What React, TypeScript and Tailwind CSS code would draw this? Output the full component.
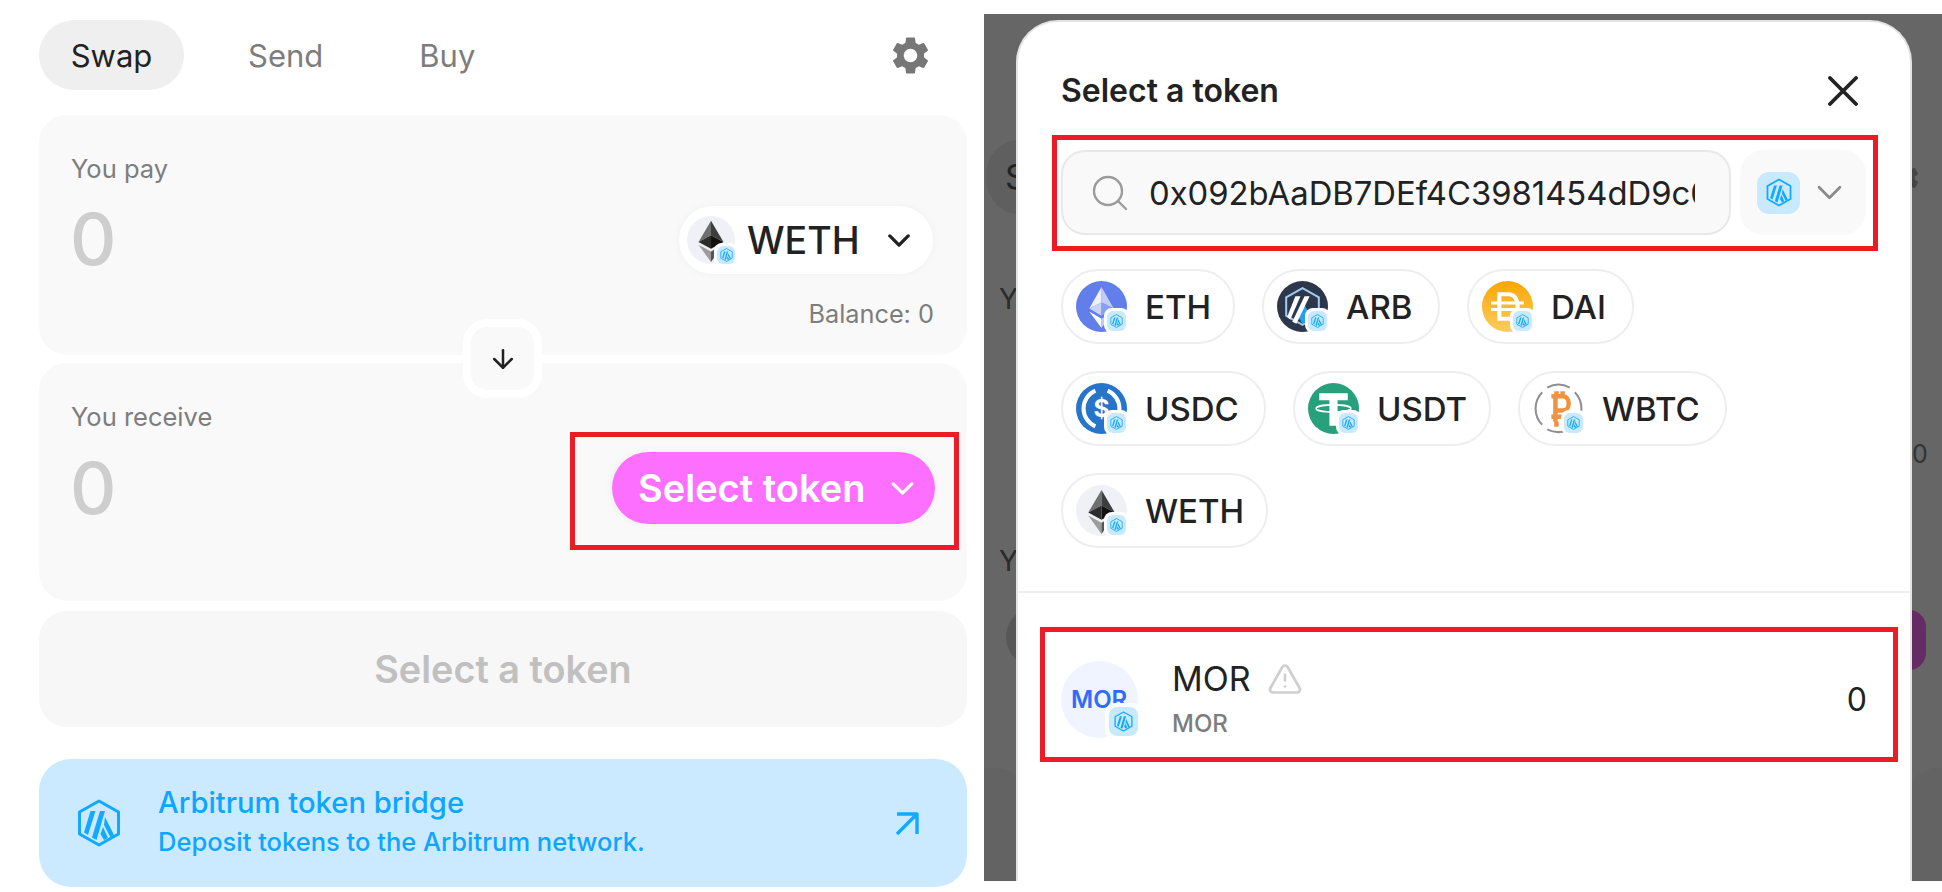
import React from "react";
import { MdSettings } from "react-icons/md";
import { ArrowDown, TriangleAlert } from "lucide-react";

function ArbMark({ className = "", color = "#12aaff" }: { className?: string; color?: string }) {
  return (
    <svg viewBox="0 0 44 48" className={className}>
      <path d="M22 2 L41.5 13 V35 L22 46 L2.5 35 V13 Z" fill="none" stroke={color} strokeWidth="3" strokeLinejoin="round" />
      <path d="M13.5 12 H18.5 L11 36 L7 33.5 Z" fill={color} />
      <path d="M23 12 H28 L19.5 41 L15 38.5 Z" fill={color} />
      <path d="M28 18 L37 36 L33.5 38.5 L27 26 Z" fill={color} />
      <path d="M26 28 L31 39 L27 41 L23.5 35 Z" fill={color} />
    </svg>
  );
}

function Badge({ outer, inner, radius, mark }: { outer: string; inner: string; radius: string; mark: string }) {
  return (
    <span className={`absolute flex items-center justify-center bg-white ${outer}`}>
      <span className={`flex items-center justify-center bg-[#c9e9ff] ${inner} ${radius}`}>
        <ArbMark className={mark} />
      </span>
    </span>
  );
}

function WethGlyph() {
  return (
    <svg viewBox="0 0 50 50" className="w-full h-full">
      <circle cx="25" cy="25" r="25" fill="#f0f1f6" />
      <path d="M25 5 L25 20 L12 27 Z" fill="#6f6f6f" />
      <path d="M25 5 L25 20 L38 27 Z" fill="#3d3d3d" />
      <path d="M12 27 L25 20 L25 34 Z" fill="#2c2c2c" />
      <path d="M38 27 L25 20 L25 34 Z" fill="#111" />
      <path d="M12 30 L25 48 L25 37 Z" fill="#9c9c9c" />
      <path d="M38 30 L25 48 L25 37 Z" fill="#555" />
    </svg>
  );
}

function EthGlyph() {
  return (
    <svg viewBox="0 0 50 50" className="w-full h-full">
      <circle cx="25" cy="25" r="25" fill="#627eea" />
      <path d="M25 6 L25 21 L13 27 Z" fill="#eef1fd" />
      <path d="M25 6 L25 21 L37 27 Z" fill="#c1ccf7" />
      <path d="M13 27 L25 21 L25 34 Z" fill="#c9d3f8" />
      <path d="M37 27 L25 21 L25 34 Z" fill="#8a9ff0" />
      <path d="M13 30 L25 46 L25 37 Z" fill="#ffffff" />
      <path d="M37 30 L25 46 L25 37 Z" fill="#c1ccf7" />
    </svg>
  );
}

function ArbGlyph() {
  return (
    <svg viewBox="0 0 50 50" className="w-full h-full">
      <circle cx="25" cy="25" r="25" fill="#2d374b" />
      <path d="M25 7 L41 16 V34 L25 43 L9 34 V16 Z" fill="#2d374b" stroke="#9dcced" strokeWidth="2" />
      <path d="M25 20 L34 36 L25 42 L20 34 Z" fill="#28a0f0" />
      <path d="M18 15 H23 L13 38 L10 35 Z" fill="#fff" />
      <path d="M27 15 H32 L19 42 L15 40 Z" fill="#fff" />
    </svg>
  );
}

function DaiGlyph() {
  return (
    <svg viewBox="0 0 50 50" className="w-full h-full">
      <defs>
        <linearGradient id="daiG" x1="0" y1="0" x2="0" y2="1">
          <stop offset="0" stopColor="#f9a606" />
          <stop offset="1" stopColor="#fbcc5f" />
        </linearGradient>
      </defs>
      <circle cx="25" cy="25" r="25" fill="url(#daiG)" />
      <path d="M15 11 H26 C33 11 37 17 37 25 C37 33 33 39 26 39 H15 Z M19 15 V35 H26 C30.5 35 33 30.5 33 25 C33 19.5 30.5 15 26 15 Z" fill="#fff" fillRule="evenodd" />
      <path d="M9 21.5 H41 M9 28 H41" stroke="#fff" strokeWidth="3" />
    </svg>
  );
}

function UsdcGlyph() {
  return (
    <svg viewBox="0 0 50 50" className="w-full h-full">
      <circle cx="25" cy="25" r="25" fill="#2775ca" />
      <path d="M19 7.5 A19 19 0 0 0 19 42.5" fill="none" stroke="#fff" strokeWidth="4" />
      <path d="M31 7.5 A19 19 0 0 1 31 42.5" fill="none" stroke="#fff" strokeWidth="4" />
      <text x="25" y="33" textAnchor="middle" fontSize="24" fontWeight="700" fill="#fff" fontFamily="Inter, sans-serif">$</text>
    </svg>
  );
}

function UsdtGlyph() {
  return (
    <svg viewBox="0 0 50 50" className="w-full h-full">
      <circle cx="25" cy="25" r="25" fill="#26a17b" />
      <path d="M11 10 H39 V17 H29 V42 H21 V17 H11 Z" fill="#fff" />
      <ellipse cx="25" cy="25" rx="17" ry="3.5" fill="none" stroke="#fff" strokeWidth="1.6" />
    </svg>
  );
}

function WbtcGlyph() {
  return (
    <svg viewBox="0 0 50 50" className="w-full h-full">
      <circle cx="25" cy="25" r="23.5" fill="#fff" />
      <path d="M9 9 A23 23 0 0 0 9 41" fill="none" stroke="#8f8f9b" strokeWidth="2" />
      <path d="M14 4.5 A23 23 0 0 1 36 4.5" fill="none" stroke="#8f8f9b" strokeWidth="2" />
      <path d="M41 9 A23 23 0 0 1 41 41" fill="none" stroke="#8f8f9b" strokeWidth="2" />
      <path d="M14 45.5 A23 23 0 0 0 30 47.5" fill="none" stroke="#8f8f9b" strokeWidth="2" />
      <path d="M18 13 H29 C37 13 37 27 29 27 H22 M22 13 V38 M18 33 H31 M23 8 V13 M29 8 V13 M23 38 V43" fill="none" stroke="#f09242" strokeWidth="4.4" />
    </svg>
  );
}

function Chip({ label, w, glyph }: { label: string; w: string; glyph: React.ReactNode }) {
  return (
    <div className={`flex items-center h-[75px] rounded-[37px] border-2 border-[#eeeeee] pl-[13px] ${w}`}>
      <span className="relative w-[51px] h-[51px] shrink-0">
        {glyph}
        <Badge outer="right-[-2px] bottom-[-1px] w-[25px] h-[25px] rounded-[8px]" inner="w-[19px] h-[20px]" radius="rounded-[6px]" mark="w-[13px] h-[14px]" />
      </span>
      <span className="ml-[18px] pt-[2px] text-[33px] font-medium text-[#222222] leading-none">{label}</span>
    </div>
  );
}

function RedBox({ className }: { className: string }) {
  return <div className={`absolute border-[5px] border-[#ed1c24] pointer-events-none ${className}`} />;
}

function Chevron({ className, color, width }: { className: string; color: string; width: number }) {
  return (
    <svg viewBox="0 0 24 14" className={className}>
      <path d="M2 2 L12 12 L22 2" fill="none" stroke={color} strokeWidth={width} strokeLinecap="round" strokeLinejoin="round" />
    </svg>
  );
}

function SwapPanel() {
  return (
    <div className="w-[984px] shrink-0 pl-[39px] pr-[17px] pt-[20px]">
      <div className="flex items-center h-[70px] text-[31px] leading-none">
        <span className="flex items-center justify-center w-[145px] h-[70px] rounded-[35px] bg-[#efefef] text-[#222222]">Swap</span>
        <span className="ml-[64px] text-[#7d7d7d]">Send</span>
        <span className="ml-[96px] text-[#7d7d7d]">Buy</span>
        <MdSettings className="ml-auto mr-[34px] text-[#777777]" size={45} />
      </div>

      <div className="relative mt-[25px] h-[240px] rounded-[28px] bg-[#f9f9f9] px-[32px] pt-[37px]">
        <div className="text-[25.5px] leading-[34px] text-[#7d7d7d]">You pay</div>
        <div className="flex items-center justify-between mt-[20px] h-[68px]">
          <span className="-ml-[1px] -mt-[2px] text-[72px] font-medium leading-none text-[#cecece]">0</span>
          <div className="flex items-center h-[68px] w-[254px] mr-[2px] rounded-[34px] bg-white pl-[8px] shadow-[0_0_10px_rgba(0,0,0,0.04)]">
            <span className="relative w-[48px] h-[48px] shrink-0">
              <WethGlyph />
              <Badge outer="right-[-3px] bottom-[-3px] w-[24px] h-[24px] rounded-[8px]" inner="w-[18px] h-[18px]" radius="rounded-[6px]" mark="w-[13px] h-[14px]" />
            </span>
            <span className="ml-[12px] pt-[2px] text-[37.5px] font-medium leading-none text-[#222222]">WETH</span>
            <Chevron className="ml-[28px] w-[22px] h-[13px]" color="#222222" width={3.6} />
          </div>
        </div>
        <div className="mt-[25px] text-right mr-[1px] text-[25.3px] leading-[30px] text-[#7d7d7d]">Balance: 0</div>
        <div className="absolute left-[424px] top-[204px] z-10 w-[79px] h-[79px] rounded-[24px] border-[8px] border-white bg-[#f9f9f9] flex items-center justify-center">
          <ArrowDown size={30} color="#222222" strokeWidth={2} />
        </div>
      </div>

      <div className="relative mt-[8px] h-[238px] rounded-[28px] bg-[#f9f9f9] px-[32px] pt-[37px]">
        <div className="text-[25.5px] leading-[34px] text-[#7d7d7d]">You receive</div>
        <div className="flex items-center justify-between mt-[18px] h-[72px]">
          <span className="-ml-[1px] text-[72px] font-medium leading-none text-[#cecece]">0</span>
          <div className="relative flex items-center w-[323px] h-[72px] rounded-[36px] bg-[#fd6fff] pl-[26px] shadow-[0_0_10px_rgba(0,0,0,0.05)]">
            <span className="text-[38px] font-semibold leading-none text-white">Select token</span>
            <Chevron className="ml-[26px] w-[23px] h-[13px]" color="#ffffff" width={3.5} />
            <RedBox className="-left-[42px] -top-[20px] w-[389px] h-[118px]" />
          </div>
        </div>
      </div>

      <div className="mt-[10px] flex items-center justify-center h-[116px] rounded-[28px] bg-[#f7f7f7] text-[37.8px] font-semibold text-[#c0c0c0]">
        Select a token
      </div>

      <div className="mt-[32px] flex items-center h-[128px] rounded-[32px] bg-[#cbeaff] pl-[38px] pr-[47px] text-[#0ea5ff]">
        <ArbMark className="w-[44px] h-[48px]" color="#12a9ff" />
        <div className="ml-[37px]">
          <div className="-mt-[2px] text-[29.2px] font-medium leading-[36px]">Arbitrum token bridge</div>
          <div className="mt-[4px] text-[25.5px] font-medium leading-[34px]">Deposit tokens to the Arbitrum network.</div>
        </div>
        <svg viewBox="0 0 26 26" className="ml-auto w-[26px] h-[26px]">
          <path d="M3 4 H23 V24 M23 4 L3 24" fill="none" stroke="#12a9ff" strokeWidth="3.4" strokeLinejoin="round" />
        </svg>
      </div>
    </div>
  );
}

function Backdrop() {
  return (
    <>
      <div className="absolute left-[2px] top-[125px] w-[100px] h-[76px] rounded-[36px] bg-[#5f5f5f] flex items-center pl-[19px] text-[34px] leading-none text-[#222222]">S</div>
      <div className="absolute left-[15px] top-[264px] text-[28px] text-[#2a2a2a]">Y</div>
      <div className="absolute left-[15px] top-[526px] text-[28px] text-[#2a2a2a]">Y</div>
      <div className="absolute left-[22px] top-[593px] w-[60px] h-[60px] rounded-full bg-[#575757]" />
      <div className="absolute left-[908px] top-[596px] w-[34px] h-[60px] rounded-full bg-[#642b64]" />
      <div className="absolute left-[902px] top-[146px] text-[#444444]"><MdSettings size={36} /></div>
      <div className="absolute left-[-20px] top-[754px] w-[60px] h-[130px] rounded-[28px] bg-[#636363]" />
      <div className="absolute left-[925px] top-[754px] w-[60px] h-[130px] rounded-[28px] bg-[#636363]" />
      <div className="absolute left-[928px] top-[422px] text-[25px] text-[#333333]">0</div>
    </>
  );
}

function Modal() {
  return (
    <div className="relative z-10 mt-[6px] ml-[32px] w-[896px] rounded-t-[42px] border-x-2 border-t-2 border-[#e4e4e4] bg-white pl-[43px] pr-[44px] pt-[50px]">
      <div className="flex items-center justify-between h-[38px]">
        <span className="text-[32px] font-semibold text-[#222222] leading-none">Select a token</span>
        <svg viewBox="0 0 30 30" className="w-[30px] h-[30px] mr-[8px]">
          <path d="M2 2 L28 28 M28 2 L2 28" stroke="#222222" strokeWidth="3.8" strokeLinecap="round" />
        </svg>
      </div>

      <div className="relative mt-[40px] flex h-[85px] gap-[9px]">
        <div className="flex items-center w-[670px] shrink-0 rounded-[24px] border-2 border-[#e8e8e8] bg-[#f9f9f9] pl-[29px] pr-[34px]">
          <svg viewBox="0 0 36 36" className="w-[36px] h-[36px] shrink-0">
            <circle cx="16" cy="16" r="14" fill="none" stroke="#9b9b9b" strokeWidth="2.4" />
            <path d="M26 26 L34 34" stroke="#9b9b9b" strokeWidth="2.4" strokeLinecap="round" />
          </svg>
          <span className="ml-[21px] pt-[2px] overflow-hidden whitespace-nowrap text-[32.8px] leading-normal text-[#222222]">0x092bAaDB7DEf4C3981454dD9c0A0D7FF07bCFc86</span>
        </div>
        <div className="flex items-center w-[127px] rounded-[24px] bg-[#f9f9f9] pl-[17px]">
          <span className="flex items-center justify-center w-[43px] h-[42px] rounded-[12px] bg-[#c9e9ff]">
            <ArbMark className="w-[26px] h-[29px]" />
          </span>
          <Chevron className="ml-[17px] w-[25px] h-[15px]" color="#8a8a8a" width={2.6} />
        </div>
        <RedBox className="-left-[9px] -top-[15px] w-[826px] h-[116px]" />
      </div>

      <div className="mt-[34px] flex flex-col gap-y-[27px]">
        <div className="flex gap-[27px]">
          <Chip label="ETH" w="w-[174px]" glyph={<EthGlyph />} />
          <Chip label="ARB" w="w-[178px]" glyph={<ArbGlyph />} />
          <Chip label="DAI" w="w-[167px]" glyph={<DaiGlyph />} />
        </div>
        <div className="flex gap-[27px]">
          <Chip label="USDC" w="w-[205px]" glyph={<UsdcGlyph />} />
          <Chip label="USDT" w="w-[198px]" glyph={<UsdtGlyph />} />
          <Chip label="WBTC" w="w-[209px]" glyph={<WbtcGlyph />} />
        </div>
        <div className="flex gap-[27px]">
          <Chip label="WETH" w="w-[207px]" glyph={<WethGlyph />} />
        </div>
      </div>

      <div className="mt-[43px] -ml-[43px] -mr-[44px] h-[2px] bg-[#eeeeee]" />

      <div className="relative mt-[68px] flex items-center h-[77px]">
        <span className="relative flex items-center w-[77px] h-[77px] shrink-0 rounded-full bg-[#f0f4ff] pl-[10px] overflow-visible">
          <span className="text-[24px] font-semibold leading-none text-[#2f6bff]">MOR</span>
          <Badge outer="right-[-4px] bottom-[-2px] w-[37px] h-[37px] rounded-[10px]" inner="w-[29px] h-[29px]" radius="rounded-[8px]" mark="w-[19px] h-[21px]" />
        </span>
        <div className="ml-[34px] -mt-[2px] flex flex-col">
          <div className="flex items-center h-[36px]">
            <span className="text-[34px] leading-none text-[#222222]">MOR</span>
            <TriangleAlert className="ml-[16px]" size={36} color="#cfcfcf" strokeWidth={1.8} />
          </div>
          <span className="mt-[15px] text-[24px] font-medium leading-none text-[#7d7d7d]">MOR</span>
        </div>
        <span className="ml-auto -mr-[1px] text-[32px] leading-none text-[#222222]">0</span>
        <RedBox className="-left-[21px] -top-[34px] w-[858px] h-[135px]" />
      </div>
    </div>
  );
}

export default function App() {
  return (
    <div className="flex w-[1942px] h-[892px] overflow-hidden bg-white font-['Inter',sans-serif]">
      <SwapPanel />
      <div className="relative mt-[14px] mb-[11px] flex-1 flex overflow-hidden bg-[#666666]">
        <Backdrop />
        <Modal />
      </div>
    </div>
  );
}
